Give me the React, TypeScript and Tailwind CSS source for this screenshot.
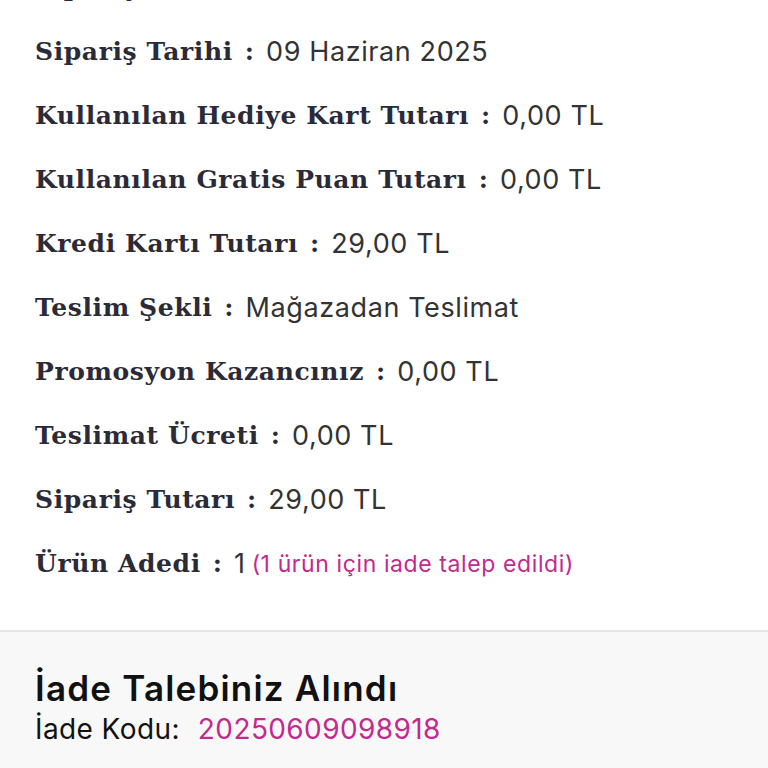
const rows: { label: string; value: string; note?: string }[] = [
  { label: "Sipariş Numarası", value: "2025060909891" },
  { label: "Sipariş Tarihi", value: "09 Haziran 2025" },
  { label: "Kullanılan Hediye Kart Tutarı", value: "0,00 TL" },
  { label: "Kullanılan Gratis Puan Tutarı", value: "0,00 TL" },
  { label: "Kredi Kartı Tutarı", value: "29,00 TL" },
  { label: "Teslim Şekli", value: "Mağazadan Teslimat" },
  { label: "Promosyon Kazancınız", value: "0,00 TL" },
  { label: "Teslimat Ücreti", value: "0,00 TL" },
  { label: "Sipariş Tutarı", value: "29,00 TL" },
  { label: "Ürün Adedi", value: "1", note: "(1 ürün için iade talep edildi)" },
];

const serif = "font-['DejaVu_Serif',serif]";
const sans = "font-['Inter',sans-serif]";

export default function App() {
  return (
    <div className="h-[768px] w-[768px] overflow-hidden bg-white">
      {/* Order details */}
      <div className="-mt-[44px] flex flex-col px-[35px] pb-[34px]">
        {rows.map((row) => (
          <div key={row.label} className="flex h-[64px] items-center whitespace-nowrap">
            <span className={`${serif} text-[25px] font-bold tracking-[0.6px] text-[#2b2b38]`}>
              {row.label}
            </span>
            <span className={`${serif} mr-[12px] ml-[12px] text-[25px] font-bold text-[#2b2b38]`}>:</span>
            <span className={`${sans} text-[27px] tracking-[0.6px] text-[#333]`}>{row.value}</span>
            {row.note && (
              <span className={`${sans} ml-[6px] text-[23px] tracking-[0.6px] text-[#c22a8e]`}>
                {row.note}
              </span>
            )}
          </div>
        ))}
      </div>

      {/* Return info */}
      <div className="border-t-2 border-[#e6e6e6] bg-[#f8f8f8] px-[35px] pt-[34px] pb-[40px]">
        <div className={`${sans} text-[35px] font-semibold leading-[44px] tracking-[1.2px] text-[#111]`}>
          İade Talebiniz Alındı
        </div>
        <div className={`${sans} flex items-center text-[28px] leading-[38px] tracking-[0.4px] text-[#111]`}>
          <span>İade Kodu:</span>
          <span className="ml-[18px] text-[#c22a8e]">20250609098918</span>
        </div>
      </div>
    </div>
  );
}
